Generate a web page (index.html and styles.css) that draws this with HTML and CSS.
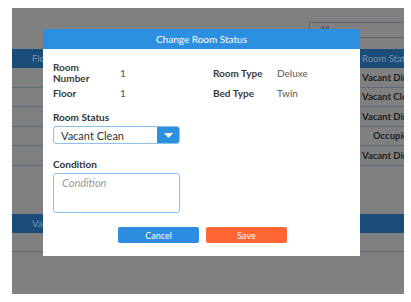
FILE: index.html
```html
<!DOCTYPE html>
<html>
<head>
<meta charset="utf-8">
<link rel="stylesheet" href="styles.css">
</head>
<body>
<div class="screen">
  <div class="page">
    <div class="toolbar">
      <div class="filter">All</div>
    </div>
    <div class="table">
      <div class="thead">
        <div class="c-left">Floor</div>
        <div class="c-right">Room Status</div>
      </div>
      <div class="trow"><div class="c-left"></div><div class="c-right">Vacant Dirty</div></div>
      <div class="trow"><div class="c-left"></div><div class="c-right">Vacant Clean</div></div>
      <div class="trow"><div class="c-left"></div><div class="c-right">Vacant Dirty</div></div>
      <div class="trow"><div class="c-left"></div><div class="c-right center">Occupied</div></div>
      <div class="trow"><div class="c-left"></div><div class="c-right">Vacant Dirty</div></div>
    </div>
    <div class="table2">
      <div class="thead2"><div class="c-left">Vacant</div></div>
      <div class="trow2"></div>
    </div>
  </div>

  <div class="modal">
    <div class="modal-head">Change Room Status</div>
    <div class="modal-body">
      <div class="info">
        <div class="lbl">Room<br>Number</div>
        <div class="val">1</div>
        <div class="lbl">Room Type</div>
        <div class="val">Deluxe</div>
        <div class="lbl">Floor</div>
        <div class="val">1</div>
        <div class="lbl">Bed Type</div>
        <div class="val">Twin</div>
      </div>
      <div class="field">
        <div class="flabel">Room Status</div>
        <div class="select">
          <span class="sel-text">Vacant Clean</span>
          <span class="sel-btn">
            <svg width="9" height="5" viewBox="0 0 9 5"><path d="M0 0 H9 L4.5 5 Z" fill="#fff"/></svg>
          </span>
        </div>
      </div>
      <div class="field cond">
        <div class="flabel">Condition</div>
        <div class="textarea">Condition</div>
      </div>
      <div class="actions">
        <button class="btn cancel">Cancel</button>
        <button class="btn save">Save</button>
      </div>
    </div>
  </div>
</div>
</body>
</html>
```

FILE: styles.css
```css
html, body {
  margin: 0;
  padding: 0;
  background: #fff;
}
body {
  font-family: Lato, "Open Sans", sans-serif;
}
.screen {
  position: relative;
  width: 411px;
  height: 302px;
  padding: 8px 7px 8px 12px;
  box-sizing: border-box;
}
.page {
  background: #808080;
  height: 286px;
  display: flex;
  flex-direction: column;
  overflow: hidden;
}
.toolbar {
  height: 41px;
  display: flex;
  justify-content: flex-end;
  align-items: flex-start;
}
.filter {
  margin-top: 14px;
  width: 95px;
  height: 16px;
  border-top: 1px solid #5f6670;
  border-bottom: 1px solid #5f6670;
  border-left: 1px solid #5f6670;
  box-sizing: border-box;
  font-size: 8px;
  color: #444;
  padding-left: 10px;
  line-height: 12px;
}
.table, .table2 {
  display: flex;
  flex-direction: column;
}
.thead, .trow, .thead2, .trow2 {
  display: flex;
  justify-content: space-between;
  font-size: 9.5px;
  box-sizing: border-box;
}
.thead {
  height: 19px;
  background: #1a4d7a;
  color: #7f93a8;
  align-items: center;
}
.trow {
  height: 19.5px;
  border-bottom: 1px solid #5d6b7c;
  align-items: center;
  color: #222;
  font-weight: 700;
}
.c-left {
  width: 40px;
  padding-left: 20px;
  white-space: nowrap;
  overflow: hidden;
  box-sizing: border-box;
}
.c-right {
  width: 44px;
  padding-left: 2px;
  white-space: nowrap;
  overflow: hidden;
  box-sizing: border-box;
}
.c-right.center {
  padding-left: 13px;
}
.table2 {
  margin-top: 48px;
}
.thead2 {
  height: 19px;
  background: #1a4d7a;
  color: #7f93a8;
  align-items: center;
}
.trow2 {
  height: 19px;
  border-bottom: 1px solid #5d6b7c;
}

.modal {
  position: absolute;
  left: 43px;
  top: 29px;
  width: 317px;
  height: 227px;
  background: #fff;
  display: flex;
  flex-direction: column;
}
.modal-head {
  height: 20px;
  background: #2d8fe0;
  color: #fff;
  font-size: 10px;
  text-align: center;
  line-height: 20px;
}
.modal-body {
  padding: 13px 10px 0 10px;
  display: flex;
  flex-direction: column;
}
.info {
  display: grid;
  grid-template-columns: 67px 93px 64px 1fr;
  row-gap: 3px;
  align-items: center;
  font-size: 10px;
}
.lbl {
  font-weight: 700;
  color: #3a3a3a;
  line-height: 11px;
}
.val {
  color: #555;
}
.field {
  margin-top: 12px;
  width: 127px;
}
.flabel {
  font-size: 10px;
  font-weight: 700;
  color: #333;
  line-height: 12px;
  margin-bottom: 3px;
}
.select {
  height: 18px;
  border: 1px solid #8fc1e8;
  border-radius: 3px;
  box-sizing: border-box;
  display: flex;
  align-items: center;
  overflow: hidden;
}
.sel-text {
  flex: 1;
  font-size: 11px;
  color: #333;
  padding-left: 7px;
}
.sel-btn {
  width: 23px;
  height: 18px;
  background: #2d8fe0;
  display: flex;
  align-items: center;
  justify-content: center;
  margin-right: -1px;
}
.cond {
  margin-top: 14px;
}
.textarea {
  height: 40px;
  border: 1px solid #8fc1e8;
  border-radius: 3px;
  box-sizing: border-box;
  font-size: 11px;
  font-style: italic;
  color: #999;
  padding: 2px 8px;
}
.actions {
  margin-top: 14px;
  display: flex;
  justify-content: center;
  gap: 7px;
  padding-left: 2px;
}
.btn {
  width: 81px;
  height: 16px;
  border: none;
  border-radius: 2px;
  color: #fff;
  font-family: Lato, sans-serif;
  font-size: 9px;
  padding: 0;
}
.cancel {
  background: #2d8be0;
}
.save {
  background: #ff6636;
}
```
